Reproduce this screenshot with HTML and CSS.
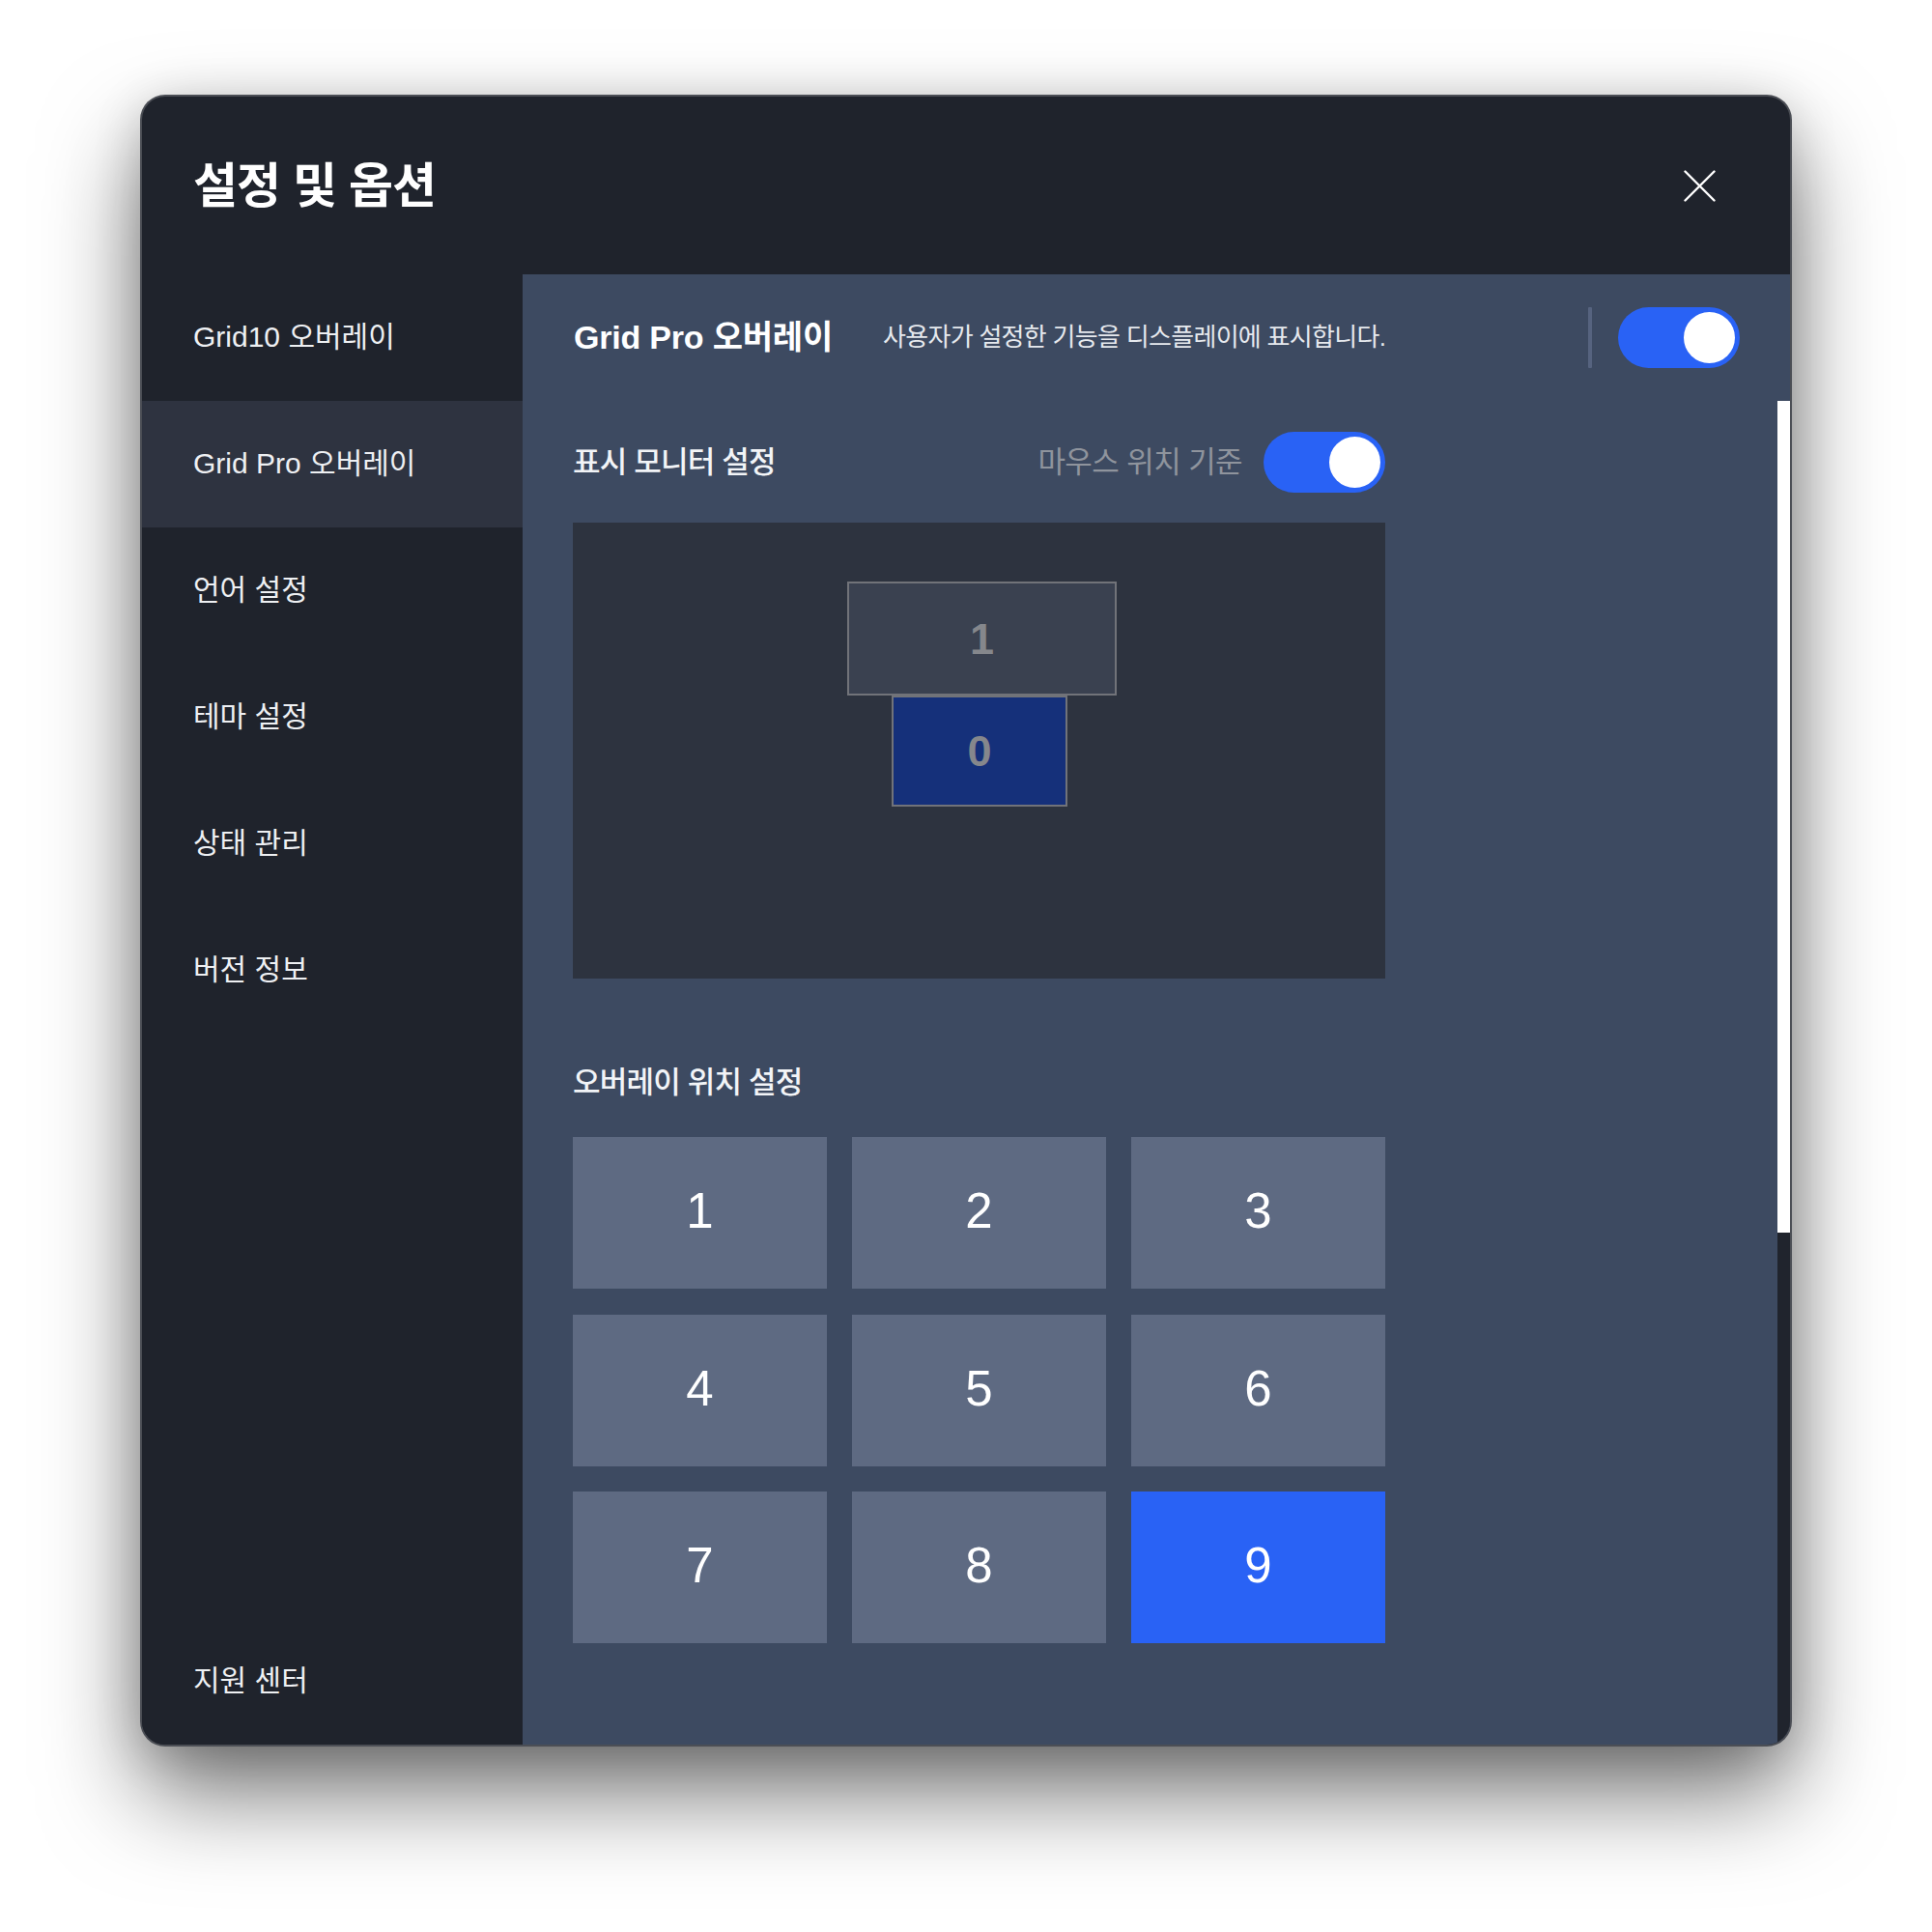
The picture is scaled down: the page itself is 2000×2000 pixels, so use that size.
FILE: index.html
```html
<!DOCTYPE html>
<html lang="ko">
<head>
<meta charset="utf-8">
<title>설정 및 옵션</title>
<link rel="stylesheet" href="styles.css">
</head>
<body>
<div class="window">
  <header class="win-header">
    <h1 class="win-title">설정 및 옵션</h1>
    <button class="close-btn" aria-label="닫기">
      <svg width="33" height="33" viewBox="0 0 33 33"><path d="M1.5 1.5 L31.5 31.5 M31.5 1.5 L1.5 31.5" stroke="#ffffff" stroke-width="2.4" fill="none" stroke-linecap="round"/></svg>
    </button>
  </header>
  <div class="win-body">
    <nav class="sidebar">
      <div class="nav-list">
        <div class="nav-item">Grid10 오버레이</div>
        <div class="nav-item active">Grid Pro 오버레이</div>
        <div class="nav-item">언어 설정</div>
        <div class="nav-item">테마 설정</div>
        <div class="nav-item">상태 관리</div>
        <div class="nav-item">버전 정보</div>
      </div>
      <div class="nav-item">지원 센터</div>
    </nav>
    <main class="panel">
      <div class="panel-head">
        <h2 class="panel-title">Grid Pro 오버레이</h2>
        <p class="panel-desc">사용자가 설정한 기능을 디스플레이에 표시합니다.</p>
        <span class="divider"></span>
        <span class="toggle"><span class="knob"></span></span>
      </div>
      <div class="panel-scroll">
        <div class="scroll-content">
          <div class="section-row">
            <h3 class="section-title">표시 모니터 설정</h3>
            <div class="row-right">
              <span class="muted-label">마우스 위치 기준</span>
              <span class="toggle"><span class="knob"></span></span>
            </div>
          </div>
          <div class="monitor-canvas">
            <div class="monitor mon-1">1</div>
            <div class="monitor mon-0">0</div>
          </div>
          <h3 class="section-title pos-title">오버레이 위치 설정</h3>
          <div class="pos-grid">
            <div class="pos-btn">1</div>
            <div class="pos-btn">2</div>
            <div class="pos-btn">3</div>
            <div class="pos-btn">4</div>
            <div class="pos-btn">5</div>
            <div class="pos-btn">6</div>
            <div class="pos-btn">7</div>
            <div class="pos-btn">8</div>
            <div class="pos-btn selected">9</div>
          </div>
        </div>
        <div class="scrollbar"><div class="thumb"></div></div>
      </div>
    </main>
  </div>
</div>
</body>
</html>
```
FILE: styles.css
```css
* { box-sizing: border-box; }

html, body {
  margin: 0;
  padding: 0;
  background: #ffffff;
}

body {
  width: 2000px;
  height: 2000px;
  padding-top: 100px;
  font-family: "Liberation Sans", "Noto Sans CJK KR", sans-serif;
  color: #ffffff;
}

.window {
  width: 1706px;
  height: 1706px;
  margin: 0 auto;
  border-radius: 24px;
  overflow: hidden;
  background: #1f232c;
  display: flex;
  flex-direction: column;
  box-shadow:
    0 0 0 2px #4b4e55,
    0 50px 100px rgba(0, 0, 0, 0.55),
    0 8px 50px rgba(0, 0, 0, 0.18);
}

.win-header {
  height: 184px;
  flex: none;
  display: flex;
  align-items: center;
  justify-content: space-between;
  padding: 0 77px 0 53px;
}

.win-title {
  margin: 0;
  font-family: "Noto Sans CJK KR", sans-serif;
  font-size: 50px;
  font-weight: 700;
  letter-spacing: -1px;
  color: #ffffff;
  line-height: 1;
  position: relative;
  top: -4px;
}

.close-btn {
  background: none;
  border: 0;
  padding: 0;
  width: 33px;
  height: 33px;
  display: flex;
  align-items: center;
  justify-content: center;
}

.win-body {
  flex: 1;
  display: flex;
  min-height: 0;
}

.sidebar {
  width: 394px;
  flex: none;
  background: #1f232c;
  display: flex;
  flex-direction: column;
  justify-content: space-between;
}

.nav-item {
  height: 131px;
  display: flex;
  align-items: center;
  padding-left: 53px;
  padding-bottom: 8px;
  font-size: 30px;
  color: #eef0f3;
}

.nav-item.active {
  background: #2e3340;
}

.panel {
  flex: 1;
  background: #3d4a61;
  display: flex;
  flex-direction: column;
  min-width: 0;
}

.panel-head {
  height: 131px;
  flex: none;
  display: flex;
  align-items: center;
  padding: 0 52px 0 53px;
}

.panel-title {
  margin: 0;
  padding-bottom: 6px;
  font-size: 34px;
  font-weight: 700;
  color: #ffffff;
  letter-spacing: -0.2px;
}

.panel-desc {
  margin: 0 0 0 52px;
  padding-bottom: 6px;
  font-size: 26px;
  color: #e6e9ee;
  letter-spacing: -0.7px;
}

.divider {
  margin-left: auto;
  width: 4px;
  height: 63px;
  background: #56637f;
  border-radius: 1px;
}

.toggle {
  width: 126px;
  height: 63px;
  border-radius: 32px;
  background: #2962f5;
  display: flex;
  align-items: center;
  justify-content: flex-end;
  padding-right: 5px;
  flex: none;
}

.panel-head .toggle {
  margin-left: 27px;
}

.knob {
  width: 53px;
  height: 53px;
  border-radius: 50%;
  background: #ffffff;
}

.panel-scroll {
  flex: 1;
  display: flex;
  min-height: 0;
}

.scroll-content {
  flex: 1;
  padding-left: 52px;
}

.section-row {
  width: 841px;
  margin-top: 32px;
  height: 63px;
  display: flex;
  align-items: center;
  justify-content: space-between;
}

.section-title {
  margin: 0;
  font-family: "Noto Sans CJK KR", sans-serif;
  font-size: 31px;
  font-weight: 500;
  color: #f2f4f7;
  letter-spacing: -0.8px;
}

.section-row .section-title {
  padding-bottom: 6px;
}

.row-right {
  display: flex;
  align-items: center;
  gap: 22px;
}

.muted-label {
  font-family: "Noto Sans CJK KR", sans-serif;
  font-size: 31px;
  color: #8f949d;
  letter-spacing: -0.6px;
  padding-bottom: 6px;
}

.monitor-canvas {
  position: relative;
  width: 841px;
  height: 472px;
  margin-top: 31px;
  background: #2d333f;
}

.monitor {
  position: absolute;
  border: 2px solid #717379;
  display: flex;
  align-items: center;
  justify-content: center;
  font-size: 45px;
  font-weight: 700;
  color: #85878c;
  line-height: 1;
}

.mon-1 {
  left: 284px;
  top: 61px;
  width: 279px;
  height: 118px;
  background: #3a4150;
}

.mon-0 {
  left: 330px;
  top: 179px;
  width: 182px;
  height: 115px;
  background: #15307a;
}

.pos-title {
  margin-top: 85px;
  line-height: 40px;
}

.pos-grid {
  margin-top: 39px;
  width: 841px;
  display: grid;
  grid-template-columns: repeat(3, 263px);
  grid-auto-rows: 157px;
  column-gap: 26px;
  row-gap: 26.5px;
}

.pos-btn {
  background: #5e6a82;
  display: flex;
  align-items: center;
  justify-content: center;
  font-size: 51px;
  color: #ffffff;
  line-height: 1;
  padding-bottom: 4px;
}

.pos-btn.selected {
  background: #2962f5;
}

.scrollbar {
  width: 13px;
  flex: none;
  background: #20242d;
  display: flex;
  flex-direction: column;
}

.thumb {
  height: 861px;
  background: #ffffff;
}
```
